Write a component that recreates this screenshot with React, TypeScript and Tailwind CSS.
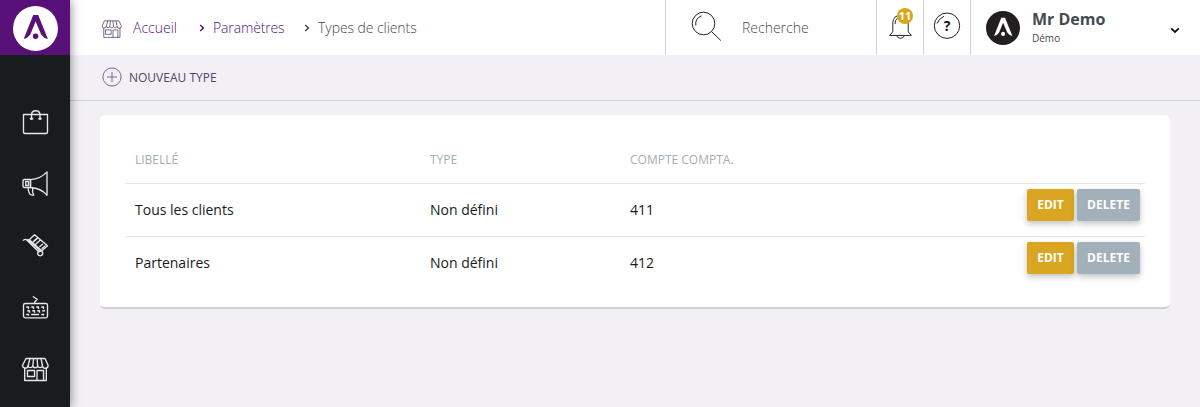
import type { ReactNode } from 'react';

function Mark({ className, disc, ink }: { className: string; disc: string; ink: string }) {
  return (
    <svg viewBox="0 0 45 45" className={className}>
      <circle cx="22.5" cy="22.5" r="22.5" fill={disc} />
      <path d="M20.2 9H25.2L34.9 33Q30.6 32.2 28.3 28.8L22.6 15.5L17.2 28.8Q14.8 32.2 10.7 33Z" fill={ink} />
      <circle cx="22.6" cy="30.3" r="2.7" fill={ink} />
    </svg>
  );
}

function Icon({ className, children }: { className: string; children: ReactNode }) {
  return (
    <svg viewBox="0 0 28 28" fill="none" stroke="currentColor" strokeLinejoin="round" strokeLinecap="round" className={className}>
      {children}
    </svg>
  );
}

const shop = (
  <>
    <path d="M5 2.5H24L27 9A2.6 2.6 0 0 1 21.5 10A2.6 2.6 0 0 1 16.7 10A2.6 2.6 0 0 1 11.8 10A2.6 2.6 0 0 1 7 10A2.6 2.6 0 0 1 1.7 9Z" />
    <path d="M9 2.5L7 10M12.6 2.5L11.8 10M16 2.5L16.7 10M20 2.5L21.5 10M3.7 12V24.5H25.3V12" />
    <path d="M6.5 14.5H13.5V20.5H6.5ZM16 24V14.5H22.5V24" />
  </>
);

const navIcons: ReactNode[] = [
  <>
    <path d="M2.5 6.5H26.5V24Q26.5 25.5 25 25.5H4Q2.5 25.5 2.5 24Z" />
    <path d="M10.5 11V7Q10.5 2.7 14.7 2.7Q19 2.7 19 7V11" />
    <path d="M9.7 10.7H11.3M18.2 10.7H19.8" strokeWidth="2" />
  </>,
  <>
    <path d="M9.5 9.7Q19.5 9 26 1.9V25.3Q20 18 9.5 17.5Z" />
    <path d="M3.4 9.5H9.5V17.5H3.4Q2 17.5 2 16V11Q2 9.5 3.4 9.5ZM7 17.7Q7.2 20.5 8.7 24Q9.6 25.5 12.7 25Q11 22.5 11.7 18" />
    <path d="M4.7 11.5H7.5V15.5H4.7Z" />
  </>,
  <>
    <path d="M2.3 8.2Q4.5 6.5 6 8.2L18 20M7 7.5L19.5 19" />
    <path d="M13.5 2.7L26.5 13.8L20.8 18.8L8.3 7.7ZM19.5 8L14 12.8M16.8 6L11.7 10.5" />
    <path d="M15.5 6.8L13.2 8.8M21.5 12.2L18.8 14.5M24 14L21 16.5" />
    <circle cx="19.2" cy="21.3" r="2.5" />
  </>,
  <>
    <rect x="2.5" y="9.5" width="24" height="14.3" rx="1.8" />
    <path d="M12.3 2.8L16.2 5.3L13.7 8V9" />
    <path strokeLinecap="butt" strokeWidth="1.6" d="M5.2 13H8M10.2 13H13M15.2 13H18M20.2 13H23M6.2 16.7H9M11.2 16.7H14M16.2 16.7H19M21.2 16.7H24M5.2 20.5H8M10.2 20.5H18M20.2 20.5H23" />
    <path strokeLinecap="butt" d="M7.5 13V15M12.5 13V15M17.5 13V15M22.5 13V15M8.5 17V18.7M13.5 17V18.7M18.5 17V18.7M7.5 20V21.5M22.5 20V21.5" />
  </>,
  shop,
];

const rows = [
  { label: 'Tous les clients', type: 'Non défini', account: '411' },
  { label: 'Partenaires', type: 'Non défini', account: '412' },
];

function Chevron({ className }: { className: string }) {
  return (
    <svg viewBox="0 0 6 8" fill="none" stroke="currentColor" strokeWidth="1.5" className={className}>
      <path d="M1.2 1L4.4 4L1.2 7" />
    </svg>
  );
}

export default function App() {
  return (
    <div className="flex h-[407px] w-[1200px] overflow-hidden bg-[#f2f0f5] font-['Open_Sans',sans-serif] text-sm text-[#181b1d]">
      <nav className="z-10 flex w-[70px] shrink-0 flex-col bg-[#181c1e] shadow-[0_0_10px_rgba(0,0,0,0.5)]">
        <div className="flex h-[55px] justify-center bg-[#571178] pt-1.5 pl-px">
          <Mark className="size-[45px]" disc="#fff" ink="#571178" />
        </div>
        <div className="flex flex-col pt-9">
          {navIcons.map((icon, i) => (
            <a key={i} className="flex h-[62px] items-center justify-center">
              <Icon className="size-7 stroke-[1.35] text-[#e6e8e8]">{icon}</Icon>
            </a>
          ))}
        </div>
      </nav>

      <div className="flex min-w-0 grow flex-col">
        <header className="flex h-[55px] shrink-0 bg-white">
          <div className="flex w-[595px] items-center pl-8 font-light">
            <Icon className="mt-[3px] -ml-px size-[21px] stroke-[1.1] text-[#5d4b77]">{shop}</Icon>
            <a className="ml-[11px] w-[66px] text-[#571178]">Accueil</a>
            <Chevron className="mt-px h-2 w-1.5 text-[#571178]" />
            <a className="ml-2 w-[91px] tracking-[-0.01em] text-[#571178]">Paramètres</a>
            <Chevron className="mt-px h-2 w-1.5 text-[#444]" />
            <span className="ml-2 tracking-[-0.005em] text-[#444b50]">Types de clients</span>
          </div>
          <div className="flex w-[211px] items-center border-l border-[#cad3db] pl-[25px] font-light text-[#444b50]">
            <svg viewBox="0 0 32 32" fill="none" stroke="#222" className="-mt-0.5 size-8">
              <circle cx="12.5" cy="12.5" r="11.3" />
              <path d="M20.5 20.5L29.8 29.5M4.8 14.5Q3.8 7.5 10.5 4.8" />
            </svg>
            <span className="ml-[19px]">Recherche</span>
          </div>
          <div className="relative flex w-[47px] justify-center border-l border-[#cad3db] pt-3">
            <svg viewBox="0 0 28 28" fill="none" stroke="#222" className="size-7 pl-px">
              <path d="M6 20V10.5Q6.5 3 14 3Q21.5 3 22 10.5V20L25.3 23.8H2.7L6 20ZM10 24Q11 26.8 14 26.8Q17 26.8 18 24M8.3 12Q8 7.5 11.3 5.5" />
            </svg>
            <span className="absolute top-2 left-5 flex size-4 items-center justify-center rounded-full bg-[#daa520] text-[11px] font-bold text-white">11</span>
          </div>
          <div className="flex w-[47px] justify-center border-l border-[#cad3db] pt-3">
            <svg viewBox="0 0 28 28" fill="none" stroke="#222" className="size-7">
              <circle cx="14" cy="13.7" r="12.7" />
              <path d="M4 11.5Q6 6.5 11 4.3" />
              <text x="14" y="18.8" textAnchor="middle" fill="#111" stroke="none" fontSize="14" fontWeight="700">?</text>
            </svg>
          </div>
          <div className="flex grow border-l border-[#cad3db] pl-[15px]">
            <Mark className="mt-[11px] size-[34px]" disc="#231f20" ink="#fff" />
            <div className="ml-3 grow pt-[9px] text-[#444b50]">
              <div className="text-base leading-5 font-bold">Mr Demo</div>
              <div className="text-[10px] leading-[19px]">Démo</div>
            </div>
            <svg viewBox="0 0 10 7" fill="none" stroke="#111" strokeWidth="1.8" className="mt-[27px] mr-5 h-[7px] w-2.5">
              <path d="M1.2 1.3L5 4.9L8.8 1.3" />
            </svg>
          </div>
        </header>

        <div className="flex h-[46px] shrink-0 items-center border-b border-[#c9d6dd] pl-8 text-xs text-[#571178]">
          <svg viewBox="0 0 20 20" fill="none" stroke="#6b5987" strokeWidth="0.9" className="-mt-px size-5">
            <circle cx="10" cy="10" r="9.1" />
            <path d="M10 5V15M5 10H15" />
          </svg>
          <span className="ml-[7px] text-[#51436b]">NOUVEAU TYPE</span>
        </div>

        <main className="mx-[30px] mt-3.5 h-[194px] rounded-[5px] border-b-2 border-[#cfced3] bg-white px-[25px] pt-5">
          <table className="w-full table-fixed border-collapse text-left">
            <colgroup>
              <col className="w-[295px]" />
              <col className="w-[200px]" />
              <col className="w-[395px]" />
              <col />
            </colgroup>
            <thead>
              <tr className="h-12 border-b border-[#e4e5ea] text-xs text-[#9faeb8]">
                <th className="px-2.5 pt-0.5 font-normal">LIBELLÉ</th>
                <th className="px-2.5 pt-0.5 font-normal">TYPE</th>
                <th className="px-2.5 pt-0.5 font-normal">COMPTE COMPTA.</th>
                <th />
              </tr>
            </thead>
            <tbody>
              {rows.map((row) => (
                <tr key={row.label} className="h-[53px] border-b border-[#e4e5ea] last:border-0">
                  <td className="px-2.5">{row.label}</td>
                  <td className="px-2.5">{row.type}</td>
                  <td className="px-2.5">{row.account}</td>
                  <td className="pt-[5px] align-top">
                    <div className="flex justify-end gap-[3px] pr-[5px] text-xs font-bold text-white">
                      <button className="h-8 w-[47px] rounded-[2px] bg-[#daa520] shadow-[0_3px_6px_rgba(0,0,0,0.24)]">EDIT</button>
                      <button className="h-8 w-[63px] rounded-[2px] bg-[#a2b0b9] shadow-[0_3px_6px_rgba(0,0,0,0.24)]">DELETE</button>
                    </div>
                  </td>
                </tr>
              ))}
            </tbody>
          </table>
        </main>
      </div>
    </div>
  );
}
